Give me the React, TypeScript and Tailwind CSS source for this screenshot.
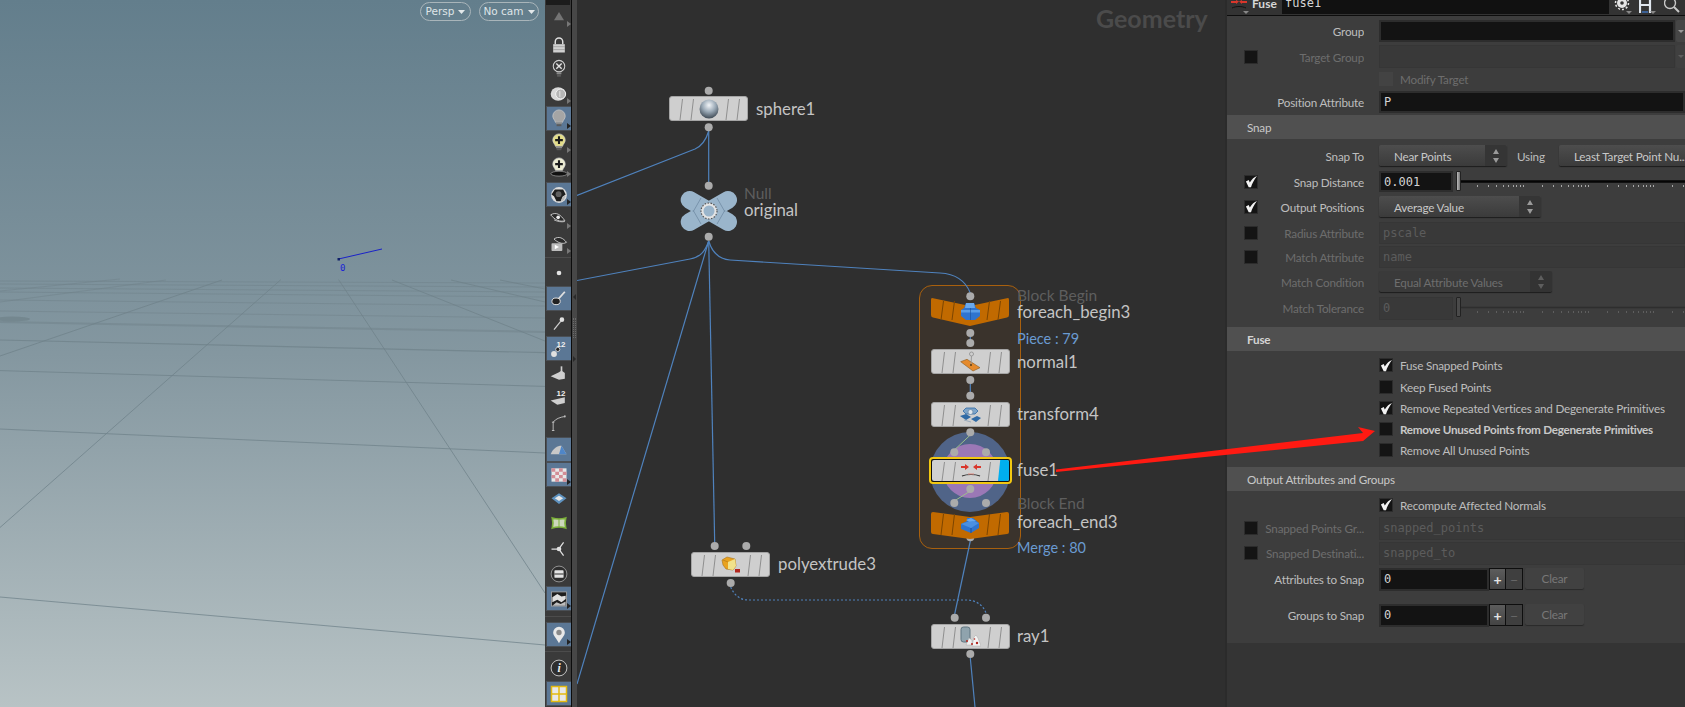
import React from "react";

const LABEL = "font-['Lato','Liberation_Sans',sans-serif]";
const MONO = "font-['DejaVu_Sans_Mono',monospace]";

/* ---------- Viewport ---------- */
function GridLines() {
  const lines: [number, number, number, number, number][] = [
    [0, 597, 545, 645, 1], [0, 429, 545, 453, 1], [0, 370.6, 545, 386.4, 1], [0, 340, 545, 352.6, 1.2],
    [0, 322, 545, 332, 2], [0, 311, 545, 318, 1], [0, 300, 545, 306, 1], [0, 292, 545, 297, 1],
    [0, 288, 545, 292, 1], [0, 284, 545, 287, 1], [0, 281, 545, 283, 1],
    [0, 527.5, 281, 279.5, 1], [545, 593, 338.5, 279.5, 1], [0, 356, 222, 280, 1], [545, 341, 392, 280, 1],
    [0, 302, 166, 280, 1], [545, 302, 451, 280, 1], [0, 291, 120, 279, 1], [545, 289, 500, 280, 1],
  ];
  return (
    <svg className="absolute inset-0" width="545" height="707" viewBox="0 0 545 707">
      {lines.map((l, i) => (
        <line key={i} x1={l[0]} y1={l[1]} x2={l[2]} y2={l[3]} stroke="#6f8189" strokeWidth={l[4]} strokeOpacity={l[1] < 335 && l[0] === 0 ? 0.5 : 0.75} />
      ))}
      <ellipse cx="12" cy="319" rx="18" ry="2.5" fill="#6f8189" fillOpacity=".7" />
      <line x1="338.5" y1="259" x2="382" y2="249" stroke="#1a22c8" strokeWidth="1" />
      <rect x="337.5" y="258" width="2.5" height="2.5" fill="#10206a" />
    </svg>
  );
}

function Pill({ text, cls }: { text: string; cls: string }) {
  return (
    <div className={`absolute top-[2px] h-[19px] rounded-full border border-[#a9b5ba] flex items-center justify-center gap-[4px] text-[10.5px] text-[#dfe5e8] font-['DejaVu_Sans',sans-serif] ${cls}`}>
      {text}
      <svg width="7" height="4" viewBox="0 0 7 4"><path d="M0 0h7L3.5 4z" fill="#e3e8ea" /></svg>
    </div>
  );
}

function Viewport() {
  return (
    <div className="relative w-[545px] h-full shrink-0 overflow-hidden bg-gradient-to-b from-[#637e8c] via-[#8497a0] to-[#b8c3c5]">
      <GridLines />
      <Pill text="Persp" cls="left-[420px] w-[51px]" />
      <Pill text="No cam" cls="left-[479px] w-[60px]" />
      <span className={`absolute left-[340px] top-[262px] text-[9px] leading-[12px] text-[#1a22d8] ${MONO}`}>0</span>
    </div>
  );
}

/* ---------- Toolbar ---------- */
const BULB = "M12 2.500a6.500 6.500 0 016.500 6.500c0 2.800-2.200 3.800-2.800 6.500H8.300C7.700 12.800 5.500 11.800 5.500 9A6.500 6.500 0 0112 2.500z";
const BIG = "translate(-1.800 -1.800) scale(1.150)";
function Bulb({ fill = "#b9b9b9", plus = false }: { fill?: string; plus?: boolean }) {
  return (
    <g transform={BIG}>
      <path d={BULB} fill={fill} stroke="#cfcfcf" strokeWidth=".7" />
      <rect x="8.800" y="15.500" width="6.400" height="2" fill="#8a8a8a" />
      <rect x="9.500" y="17.500" width="5" height="2" fill="#5a5a5a" />
      {plus && <path d="M12 5v8M8 9h8" stroke="#1c1c1c" strokeWidth="2.200" />}
    </g>
  );
}

function ToolIcon({ k }: { k: string }) {
  switch (k) {
    case "tri": return <path d="M12 6l6 10H6z" fill="#747474" />;
    case "lock": return <g><path d="M7.500 11V8a4.500 4.500 0 019 0v3" fill="none" stroke="#e0e0e0" strokeWidth="1.700" /><rect x="5" y="11" width="14" height="10" fill="#d0d0d0" /><path d="M5 14h14M5 17.500h14" stroke="#8a8a8a" strokeWidth=".7" /></g>;
    case "bx": return <g transform={BIG}><circle cx="12" cy="9" r="6" fill="#3c3c3c" stroke="#cfcfcf" strokeWidth="1.100" /><path d="M9.200 6.200l5.600 5.600M14.800 6.200l-5.600 5.600" stroke="#e0e0e0" strokeWidth="1.500" /><rect x="9.500" y="15.500" width="5" height="2" fill="#8a8a8a" /><rect x="10" y="17.500" width="4" height="2.500" fill="#5a5a5a" /></g>;
    case "sph": return <g><ellipse cx="11" cy="12" rx="9" ry="8" fill="#d8d8d8" /><circle cx="14" cy="12" r="6" fill="#b5b5b5" stroke="#f2f2f2" strokeWidth="1.200" /><path d="M13 8.500v7" stroke="#eee" /></g>;
    case "bulb": return <Bulb fill="#a5a5a5" />;
    case "ybulb": return <Bulb fill="#e3dd8a" plus />;
    case "wbulb": return <g transform={BIG}><ellipse cx="12" cy="19" rx="8.500" ry="2.500" fill="#111" stroke="#bbb" strokeWidth=".6" /><path d={BULB} fill="#ececd2" stroke="#cfcfcf" strokeWidth=".7" /><path d="M12 5v8M8 9h8" stroke="#1c1c1c" strokeWidth="2.200" /></g>;
    case "ball": return <g><circle cx="12" cy="12" r="9.500" fill="#dcdcdc" /><path d="M7 5.500h10l3 6-3 2-3 6-5 0-3-6-3-2z" fill="#1f1f1f" /><circle cx="11.500" cy="11" r="3.500" fill="#5f5f5f" /><path d="M16 14l4-1-2 5-4 2z" fill="#bbb" /></g>;
    case "eye": return <g><path d="M2 7c7-4 12 0 17 7-6 2-12-1-17-7z" fill="#2a2a2a" stroke="#ddd" strokeWidth="1" /><circle cx="11" cy="10" r="2.200" fill="#eee" /><path d="M6 13c4 2 9 3 13 2" stroke="#ccc" fill="none" /></g>;
    case "cam": return <g><path d="M6 6c6-4 11-1 15 4-5 3-11 0-15-4z" fill="#2a2a2a" stroke="#ddd" strokeWidth="1" /><rect x="3" y="11" width="13" height="9.500" rx="1" fill="#bcbcbc" /><path d="M7 13l5 2.700-5 2.700z" fill="#fff" /></g>;
    case "dot": return <circle cx="12" cy="12" r="2.800" fill="#e4e4e4" />;
    case "brush": return <g><path d="M11 13.500l8-9" stroke="#e0e0e0" strokeWidth="2.200" /><ellipse cx="8.500" cy="16" rx="5" ry="4" fill="#222" stroke="#e0e0e0" strokeWidth="1.200" /></g>;
    case "pen": return <g><path d="M6 20l8-10" stroke="#cfcfcf" strokeWidth="1.500" /><circle cx="15.500" cy="8" r="2.800" fill="#e0e0e0" /></g>;
    case "n12": return <g><circle cx="6" cy="18" r="3.500" fill="#e0e0e0" /><circle cx="10.500" cy="12.500" r="2.500" fill="#222" stroke="#e0e0e0" /><text x="9" y="10" fontSize="9.500" fontWeight="700" fill="#f0f0f0" fontFamily="Liberation Sans">12</text></g>;
    case "wedge": return <g><path d="M2 16l10-5 3-2 4 3v7l-7 1z" fill="#cfcfcf" /><path d="M15 10V4" stroke="#cfcfcf" strokeWidth="2" /></g>;
    case "w12": return <g><path d="M2 15l17-4v7l-9 2z" fill="#cfcfcf" /><text x="9" y="10" fontSize="9.500" fontWeight="700" fill="#f0f0f0" fontFamily="Liberation Sans">12</text></g>;
    case "corner": return <path d="M5 21V11c3-4 8-6 15-7M3.500 11h3M3.500 21h3M19 2.500v3" fill="none" stroke="#cfcfcf" strokeWidth="1" />;
    case "shade": return <g><path d="M2 17c3-7 8-10 13-10l6 10H9z" fill="#c8c8c8" /><path d="M15 7l6 10h-9z" fill="#4f86c8" /></g>;
    case "check": return <g><rect x="3" y="4" width="18" height="16" fill="#e8e8e8" /><path d="M3 4h4.500v4H3zM12 4h4.500v4H12zM7.500 8H12v4H7.500zM16.500 8H21v4h-4.500zM3 12h4.500v4H3zM12 12h4.500v4H12zM7.500 16H12v4H7.500zM16.500 16H21v4h-4.500z" fill="#d38d96" /></g>;
    case "diamond": return <g><path d="M12 5l9 6-9 7-9-7z" fill="#5f93c0" /><path d="M12 8l5 3-5 3.500L7 11z" fill="#e8e8e8" /></g>;
    case "green": return <g><path d="M4 6c5 1.500 11 1.500 16 0-1 4-1 8 0 12-5-1.500-11-1.500-16 0 1-4 1-8 0-12z" fill="#cdd8bc" stroke="#7db23a" strokeWidth="2" /><path d="M12 7.500v9" stroke="#7db23a" strokeWidth="1.200" /></g>;
    case "axes": return <g><path d="M11 12H3M12.500 11l5-7M12.500 13l5 7" stroke="#e0e0e0" strokeWidth="1.500" /><circle cx="12" cy="12" r="2.800" fill="#e0e0e0" /></g>;
    case "circ": return <g><circle cx="12" cy="12" r="9.500" fill="#2e2e2e" stroke="#a5a5a5" strokeWidth="1" /><rect x="6.500" y="7.500" width="11" height="9" rx="1" fill="#e4e4e4" /><path d="M6.500 12h11" stroke="#2e2e2e" strokeWidth="1.200" /></g>;
    case "photo": return <g><rect x="3" y="3.500" width="18" height="17" fill="#1e1e1e" stroke="#a5a5a5" /><path d="M4 10l6-4 5 3 5-1v4l-5 4-5-3-6 3z" fill="#e0e0e0" /><path d="M4 20l5-4 5 2 6-3v5z" fill="#bdbdbd" /></g>;
    case "pin": return <g><path d="M12 22c-3-6-7-9-7-13a7 7 0 0114 0c0 4-4 7-7 13z" fill="#e8e8e8" /><circle cx="12" cy="9" r="3.200" fill="#8a8a8a" /></g>;
    case "info": return <g><circle cx="12" cy="12" r="9.500" fill="#2e2e2e" stroke="#cfcfcf" strokeWidth="1.100" /><text x="12" y="17" textAnchor="middle" fontSize="14" fontStyle="italic" fontWeight="700" fill="#eee" fontFamily="Liberation Serif">i</text></g>;
    case "grid": return <g><rect x="3" y="3" width="18" height="18" fill="#e8e8e8" stroke="#e3b90f" strokeWidth="1.800" /><path d="M12 3v18M3 12h18" stroke="#e3b90f" strokeWidth="1.800" /></g>;
    default: return null;
  }
}

function Tool({ k, cls, sel, arrow }: { k: string; cls: string; sel?: boolean; arrow?: boolean }) {
  return (
    <div className={`relative h-[23px] w-[24px] ml-[1.500px] flex items-center justify-center shrink-0 ${sel ? "bg-[#5b7795] outline outline-1 outline-[#4a4f55]" : ""} ${cls}`}>
      <svg width="20" height="20" viewBox="0 0 24 24"><ToolIcon k={k} /></svg>
      {arrow && <span className={`absolute right-0 bottom-[1px] w-0 h-0 border-y-[3px] border-y-transparent border-l-[4px] ${sel ? "border-l-[#222]" : "border-l-[#777]"}`} />}
    </div>
  );
}

function Toolbar() {
  return (
    <div className="w-[26px] h-full bg-[#3a3a3a] flex flex-col shrink-0 relative">
      <div className="h-[5px] w-[24px] ml-[1px] bg-[#1c1c1c] shrink-0" />
      <Tool k="tri" cls="mt-[0px]" arrow />
      <Tool k="lock" cls="mt-[5px]" />
      <Tool k="bx" cls="mt-[1.500px]" />
      <Tool k="sph" cls="mt-[1.500px]" arrow />
      <Tool k="bulb" cls="mt-[2px]" sel arrow />
      <Tool k="ybulb" cls="mt-[1px]" arrow />
      <Tool k="wbulb" cls="mt-[1px]" arrow />
      <Tool k="ball" cls="mt-[5px]" sel arrow />
      <Tool k="eye" cls="mt-[1px]" arrow />
      <Tool k="cam" cls="mt-[2px]" arrow />
      <div className="h-px bg-[#4c4c4c] mt-[1.500px] shrink-0" />
      <Tool k="dot" cls="mt-[3.500px]" />
      <Tool k="brush" cls="mt-[2.500px]" sel />
      <Tool k="pen" cls="mt-[1.500px]" />
      <Tool k="n12" cls="mt-[3px]" sel />
      <Tool k="wedge" cls="mt-[1px]" />
      <Tool k="w12" cls="mt-[2px]" />
      <Tool k="corner" cls="mt-[2px]" />
      <Tool k="shade" cls="mt-[4px]" sel />
      <Tool k="check" cls="mt-[2px]" sel arrow />
      <Tool k="diamond" cls="mt-[1px]" />
      <Tool k="green" cls="mt-[1px]" />
      <Tool k="axes" cls="mt-[3px]" />
      <Tool k="circ" cls="mt-[2px]" />
      <Tool k="photo" cls="mt-[2px]" sel arrow />
      <div className="h-px bg-[#4c4c4c] mt-[6px] shrink-0" />
      <Tool k="pin" cls="mt-[6px]" sel arrow />
      <div className="h-px bg-[#4c4c4c] mt-[5px] shrink-0" />
      <Tool k="info" cls="mt-[4px]" />
      <Tool k="grid" cls="mt-[3px]" sel />
    </div>
  );
}

function Divider() {
  return (
    <div className="relative w-[6px] h-full shrink-0 bg-[#474747] border-l border-l-[#0c0c0c]">
      <span className="absolute left-[1px] top-[294px] w-0 h-0 border-y-[3px] border-y-transparent border-r-[3px] border-r-[#2a2a2a]" />
      <span className="absolute left-[1px] top-[318px] h-[20px] w-[3px] border-x border-dotted border-[#6a6a6a]" />
      <span className="absolute left-[1px] top-[356px] w-0 h-0 border-y-[3px] border-y-transparent border-l-[3px] border-l-[#2a2a2a]" />
    </div>
  );
}

/* ---------- Network ---------- */
function Stripes({ w = 79, h = 25, color = "#8f8f8f" }: { w?: number; h?: number; color?: string }) {
  return (
    <svg className="absolute inset-0" width={w} height={h} viewBox={`0 0 ${w} ${h}`}>
      {[10, 21, 56, 67].map((x) => (
        <line key={x} x1={x + 2.500} y1={2} x2={x} y2={h - 2} stroke={color} strokeWidth="1" />
      ))}
    </svg>
  );
}

function SphereIcon() {
  return (
    <svg width="20" height="20" viewBox="0 0 20 20">
      <defs>
        <radialGradient id="sg" cx="50%" cy="30%" r="70%">
          <stop offset="0" stopColor="#f2f5f8" />
          <stop offset=".5" stopColor="#9aa9b6" />
          <stop offset="1" stopColor="#3f4a55" />
        </radialGradient>
      </defs>
      <circle cx="10" cy="10" r="9.500" fill="url(#sg)" />
    </svg>
  );
}
function NormalIcon() {
  return (
    <svg width="21" height="21" viewBox="0 0 21 21">
      <path d="M.7 10.700L7 8.300 20 16.700 13 20z" fill="#e58a2c" stroke="#8a5a20" strokeWidth=".6" />
      <path d="M11 14L11.500 5" stroke="#9a9a9a" strokeWidth="1" />
      <circle cx="11.500" cy="3" r="2" fill="none" stroke="#9a9a9a" />
      <circle cx="11" cy="14" r="1" fill="#5a3a10" />
    </svg>
  );
}
function TransformIcon() {
  return (
    <svg width="21" height="16" viewBox="0 0 21 16">
      <path d="M6 1h9l3 3-3 3H6L3 4z" fill="#7da4c8" stroke="#2f6aa5" strokeWidth=".8" />
      <path d="M0 9l6-2 5 3-5 3zM11 12l6-3 4 2-5 4z" fill="#2f6aa5" />
      <circle cx="10.500" cy="5" r="2.500" fill="#dfe6ec" stroke="#6f8ca8" strokeWidth=".8" />
      <path d="M4 13l7 2" stroke="#9ab" strokeWidth="1" />
    </svg>
  );
}
function FuseIcon() {
  return (
    <svg width="20" height="15" viewBox="0 0 20 15">
      <path d="M0 3h4V1l4 3-4 3V5H0z" fill="#d9362b" />
      <path d="M20 3h-4V1l-4 3 4 3V5h4z" fill="#d9362b" />
      <path d="M1 13c5-2 13-2 18 0" stroke="#333" strokeWidth="1.200" fill="none" />
      <path d="M7 11h6" stroke="#e08a80" strokeWidth="1" />
    </svg>
  );
}
function ExtrudeIcon() {
  return (
    <svg width="20" height="17" viewBox="0 0 20 17">
      <path d="M1 4l5-3 8 2 1 7-3 4-7-1-3-4z" fill="#e9a21e" stroke="#a9741a" strokeWidth=".6" />
      <path d="M7 6l7-3 1 7-3 4-5-1z" fill="#f1e28b" />
      <path d="M2 4l5 2" stroke="#a9741a" strokeWidth=".6" />
      <rect x="14" y="13" width="5" height="3.500" fill="#b3261e" />
    </svg>
  );
}
function RayIcon() {
  return (
    <svg width="21" height="21" viewBox="0 0 21 21">
      <rect x="1" y="1" width="9" height="15" rx="2.500" fill="#8fa3ad" stroke="#5f7480" />
      <path d="M6 19l3-7 3 2 0 5z" fill="#efefef" stroke="#a9a9a9" strokeWidth=".5" />
      <path d="M12 20l2-9 2-2 2 3 3 8z" fill="#f4f4f4" stroke="#a9a9a9" strokeWidth=".5" />
      <circle cx="7" cy="15" r="1" fill="#b3261e" />
      <circle cx="17" cy="17" r="1.200" fill="#b3261e" />
      <circle cx="12" cy="18" r="1" fill="#b3261e" />
      <circle cx="14.500" cy="13" r=".8" fill="#b3261e" />
    </svg>
  );
}
function CubeIcon({ flat }: { flat?: boolean }) {
  return flat ? (
    <svg width="20" height="17" viewBox="0 0 20 17">
      <path d="M1 7l6-3V1l6 0 6 5v5l-8 5-10-4z" fill="#2f74cf" />
      <path d="M6 3l5-2 5 3-5 2z" fill="#6aa9ee" />
      <path d="M1 7l10 4 8-5-6-2-6 1z" fill="#4b90e2" />
      <path d="M11 11v5" stroke="#1c4f97" />
    </svg>
  ) : (
    <svg width="21" height="17" viewBox="0 0 21 17">
      <path d="M6 0h8l2 5 4 2v6l-5 4H6l-5-4V7l3-2z" fill="#2f74cf" />
      <path d="M6 0h8l1 5H5z" fill="#6aa9ee" />
      <path d="M1 7h19v2.500H1z" fill="#5b9de6" />
      <path d="M10.500 5v12" stroke="#1c4f97" strokeWidth=".6" />
    </svg>
  );
}

function GrayNode({ cls, children }: { cls: string; children: React.ReactNode }) {
  return (
    <div className={`absolute w-[79px] h-[25px] rounded-[3px] bg-[#cfcfcf] flex items-center justify-center border border-[#a5a5a5] ${cls}`}>
      <Stripes />
      <span className="relative flex">{children}</span>
    </div>
  );
}

function OrangeNode({ cls, top, children }: { cls: string; top?: boolean; children: React.ReactNode }) {
  return (
    <div className={`absolute w-[80px] h-[31px] flex items-center justify-center ${cls}`}>
      <svg className="absolute inset-0" width="80" height="31" viewBox="0 0 80 31">
        {top ? (
          <path d="M2 2l38 8 38-8q1 0 1 2v15q0 2-2 2.500L40 30 3 21.500Q1 21 1 19V4q0-2 1-2z" fill="#c16a00" />
        ) : (
          <path d="M3 2l37 5 37-5q2 0 2 2v18q0 2-2 2l-37 5-37-5q-2 0-2-2V4q0-2 2-2z" fill="#c16a00" />
        )}
        {[11, 22, 57, 68].map((x) => (
          <line key={x} x1={x + 2.500} y1={top ? 5 : 4} x2={x} y2={top ? 24 : 25} stroke="#7c4500" strokeWidth="1" />
        ))}
      </svg>
      <span className="relative flex">{children}</span>
    </div>
  );
}

function NullNode() {
  return (
    <div className="absolute left-[103px] top-[190px] w-[58px] h-[42px]">
      <svg width="58" height="42" viewBox="0 0 58 42">
        <path d="M9.700 10L48 32M48 10L9.700 32" stroke="#9ab5cb" strokeWidth="18" strokeLinecap="round" />
        <path d="M13 22L21 8M45 22L37 8M13 20L21 34M45 20L37 34" stroke="#7590a8" strokeWidth=".9" />
        <circle cx="29" cy="21" r="8" fill="#e5e5e5" stroke="#555" strokeWidth="1.200" strokeDasharray="1.500 1.500" />
        <circle cx="29" cy="21" r="5.500" fill="#9ab5cb" />
      </svg>
    </div>
  );
}

function NetLabel({ cls, children, tone = "text-[#c4c4c4]", size = "text-[16.8px]" }: { cls: string; children: React.ReactNode; tone?: string; size?: string }) {
  return <div className={`absolute whitespace-nowrap leading-[20px] ${size} ${tone} ${LABEL} ${cls}`}>{children}</div>;
}

function Wires() {
  const dots: [number, number][] = [
    [708.7, 90.7], [708.7, 127.3], [708.7, 185.7], [708.7, 236.7],
    [970.3, 296.3], [970.3, 333], [970.3, 343], [970.3, 380], [970.3, 395.7], [970.3, 432.3],
    [954.3, 452.3], [986, 452.3], [970.3, 489], [954.3, 503], [986, 503], [970.3, 537.3],
    [714.7, 546], [746.3, 546], [730.7, 583], [954.7, 617.7], [986, 617.7], [970.3, 654],
  ];
  return (
    <svg className="absolute inset-0 z-20" width="649" height="707" viewBox="577 0 649 707" fill="none">
      <g stroke="#4f82bd" strokeWidth="1.200">
        <path d="M708.700 131V182" />
        <path d="M708.700 131C706 140 702 146 695 149L577 195.500" />
        <path d="M708.700 241C705 252 700 257 690 259L577 280.500" />
        <path d="M708.700 241C712 252 718 259 730 260L940 273C958 274 966 282 970.300 293" />
        <path d="M708.700 241L577 684" />
        <path d="M708.700 241L714.700 543" />
        <path d="M970.300 337V340M970.300 384V392" />
        <path d="M970.300 541L954.700 614" />
        <path d="M970.300 658L975 707" />
        <path d="M730.700 587C734 595 740 600 748 600H966C976 600 983 605 986 613" strokeDasharray="2 2" />
      </g>
      <path d="M970.300 435L954.300 450M970.300 491L954.300 501" stroke="#9cc08a" strokeWidth="1" />
      {dots.map(([x, y], i) => (
        <circle key={i} cx={x} cy={y} r="4" fill="#ababab" />
      ))}
    </svg>
  );
}

function Network() {
  return (
    <div className="relative flex-1 h-full bg-[#2f2f2f] overflow-hidden">
      <div className={`absolute left-[519px] top-[4px] text-[25px] leading-[28px] font-bold text-[#4b4b4b] ${LABEL}`}>Geometry</div>

      <div className="absolute left-[342px] top-[285px] w-[102px] h-[264px] rounded-[13px] border border-[#a8600e] bg-[#3a332c]" />
      <div className="absolute left-[353px] top-[432px] w-[80px] h-[80px] rounded-full bg-[#506488]" />
      <div className="absolute left-[366px] top-[444px] w-[54px] h-[54px] rounded-full bg-[#9b78b6]" />

      <Wires />

      <GrayNode cls="z-10 left-[92px] top-[96px]"><SphereIcon /></GrayNode>
      <NullNode />
      <OrangeNode top cls="z-10 left-[353px] top-[296px]"><CubeIcon /></OrangeNode>
      <GrayNode cls="z-10 left-[354px] top-[349px]"><NormalIcon /></GrayNode>
      <GrayNode cls="z-10 left-[354px] top-[402px]"><TransformIcon /></GrayNode>
      <div className="absolute z-30 left-[352px] top-[457px] w-[83px] h-[27px] rounded-[4px] border-2 border-[#f2c811] overflow-hidden bg-[#111] p-px">
        <div className="relative h-full rounded-[2px] bg-[#d0d0d0] flex items-center justify-center overflow-hidden">
          <Stripes w={77} h={23} />
          <span className="relative flex"><FuseIcon /></span>
          <span className="absolute -right-[2px] top-0 h-full w-[13px] bg-[#00aeef] -skew-x-6 origin-bottom" />
        </div>
      </div>
      <OrangeNode cls="z-30 left-[353px] top-[510px]"><CubeIcon flat /></OrangeNode>
      <GrayNode cls="z-10 left-[114px] top-[552px]"><ExtrudeIcon /></GrayNode>
      <GrayNode cls="z-10 left-[354px] top-[624px]"><RayIcon /></GrayNode>

      <NetLabel cls="left-[179px] top-[99px]">sphere1</NetLabel>
      <NetLabel cls="left-[167px] top-[183px]" tone="text-[#5e5e5e]" size="text-[15.500px]">Null</NetLabel>
      <NetLabel cls="left-[167px] top-[200px]">original</NetLabel>
      <NetLabel cls="left-[440px] top-[285px]" tone="text-[#5e5e5e]" size="text-[15.500px]">Block Begin</NetLabel>
      <NetLabel cls="left-[440px] top-[302px]">foreach_begin3</NetLabel>
      <NetLabel cls="left-[440px] top-[329px]" tone="text-[#6a9bd2]" size="text-[14.500px]">Piece : 79</NetLabel>
      <NetLabel cls="left-[440px] top-[352px]">normal1</NetLabel>
      <NetLabel cls="left-[440px] top-[404px]">transform4</NetLabel>
      <NetLabel cls="left-[440px] top-[460px]">fuse1</NetLabel>
      <NetLabel cls="left-[440px] top-[493px]" tone="text-[#5e5e5e]" size="text-[15.500px]">Block End</NetLabel>
      <NetLabel cls="left-[440px] top-[512px]">foreach_end3</NetLabel>
      <NetLabel cls="left-[440px] top-[538px]" tone="text-[#6a9bd2]" size="text-[14.500px]">Merge : 80</NetLabel>
      <NetLabel cls="left-[201px] top-[554px]">polyextrude3</NetLabel>
      <NetLabel cls="left-[440px] top-[626px]">ray1</NetLabel>
    </div>
  );
}

/* ---------- Parameters ---------- */
const PTEXT = "text-[11.7px] tracking-[-0.2px] leading-[16px]";

function Check({ on, dim, cls = "" }: { on?: boolean; dim?: boolean; cls?: string }) {
  return (
    <span className={`relative flex items-center justify-center w-[14px] h-[14px] shrink-0 ${dim ? "bg-[#434343]" : "bg-[#141414] border border-[#2c2c2c]"} ${cls}`}>
      {on && (
        <svg width="13" height="13" viewBox="0 0 13 13">
          <path d="M1 6.500L4 12.800H6.500C7.500 9 10 4.500 13 .5 10 1.500 7.500 4 5.200 7.500L4 5z" fill="#f2f2f2" />
        </svg>
      )}
    </span>
  );
}

function Row({ label, check, on, dim, cls, children }: { label?: string; check?: boolean; on?: boolean; dim?: boolean; cls: string; children?: React.ReactNode }) {
  return (
    <div className={`flex items-center pl-[17px] shrink-0 ${cls}`}>
      <span className="w-[14px] shrink-0 flex">{check && <Check on={on} />}</span>
      <span className={`w-[106px] shrink-0 text-right whitespace-nowrap overflow-hidden ${PTEXT} ${dim ? "text-[#6d6d6d]" : "text-[#bdbdbd]"}`}>{label}</span>
      <span className="w-[15px] shrink-0" />
      {children}
    </div>
  );
}

function Field({ value, dim, cls = "flex-1" }: { value?: string; dim?: boolean; cls?: string }) {
  return (
    <div className={`h-full flex items-center pl-[3px] text-[12px] ${MONO} ${dim ? "bg-[#393939] border border-[#363636] text-[#5c5c5c]" : "bg-[#131313] border-2 border-[#2d2d2d] text-[#d4d4d4]"} ${cls}`}>
      {value}
    </div>
  );
}

function Select({ label, dim, cls, pad = "pl-[15px]" }: { label: string; dim?: boolean; cls: string; pad?: string }) {
  return (
    <div className={`relative h-full shrink-0 flex items-center rounded-[2px] shadow-[0_1px_1px_#1c1c1c] ${dim ? "bg-[#3a3a3a] text-[#6e6e6e]" : "bg-gradient-to-b from-[#4d4d4d] to-[#3b3b3b] text-[#c8c8c8]"} ${cls}`}>
      <span className={`flex-1 whitespace-nowrap ${PTEXT} ${pad}`}>{label}</span>
      <span className={`w-[22px] h-full flex items-center justify-center rounded-r-[2px] ${dim ? "bg-[#333]" : "bg-[#353535]"}`}>
        <svg width="8" height="16" viewBox="0 0 8 16">
          <path d="M4 1l3 5H1zM4 15l3-5H1z" fill={dim ? "#5e5e5e" : "#9a9a9a"} />
        </svg>
      </span>
    </div>
  );
}

function Slider({ dim }: { dim?: boolean }) {
  const ticks: number[] = [];
  for (let d = 0; d < 4; d++) {
    for (const t of [0, 11, 19, 26, 31, 36, 39, 43, 46]) ticks.push(24 + d * 65 + t);
  }
  return (
    <div className="relative flex-1 h-full">
      <span className={`absolute left-[3px] top-0 w-[5px] h-[20px] rounded-[1px] border border-[#222] ${dim ? "bg-[#4a4a4a]" : "bg-gradient-to-r from-[#bbb] to-[#777]"}`} />
      <svg className="absolute left-0 top-0" width="232" height="24" viewBox="0 0 232 24">
        <line x1="8" y1="10.500" x2="232" y2="10.500" stroke={dim ? "#2e2e2e" : "#050505"} strokeWidth={dim ? 1.500 : 2.500} />
        {ticks.map((x, i) => (
          <rect key={i} x={x} y="14" width="1" height="2" fill={dim ? "#5e5e5e" : "#a8a8a8"} />
        ))}
      </svg>
    </div>
  );
}

function Section({ title, bold, cls }: { title: string; bold?: boolean; cls: string }) {
  return (
    <div className={`h-[24px] bg-[#505050] flex items-center pl-[20px] shrink-0 ${PTEXT} ${bold ? "font-bold text-[#d4d4d4]" : "text-[#c8c8c8]"} ${cls}`}>
      {title}
    </div>
  );
}

function CheckRow({ label, on, strong }: { label: string; on?: boolean; strong?: boolean }) {
  return (
    <div className="h-[21px] flex items-center pl-[152px] shrink-0">
      <Check on={on} />
      <span className={`ml-[7px] whitespace-nowrap text-[11.7px] leading-[16px] ${strong ? "font-bold text-[#c8c8c8] tracking-[-0.28px]" : "text-[#bdbdbd] tracking-[-0.2px]"}`}>{label}</span>
    </div>
  );
}

function Multi({ cls, label }: { cls: string; label: string }) {
  return (
    <Row label={label} cls={`h-[23px] ${cls}`}>
      <Field value="0" cls="w-[110px]" />
      <span className="w-[17px] h-[22px] border border-[#0e0e0e] bg-gradient-to-b from-[#5c5c5c] to-[#444] text-[#e5e5e5] flex items-center justify-center text-[14px] font-bold">+</span>
      <span className="w-[17px] h-[22px] border border-[#0e0e0e] border-l-0 bg-[#3f3f3f] text-[#666] flex items-center justify-center text-[14px]">−</span>
      <span className={`ml-[2px] w-[59px] h-[21px] -mt-[2px] bg-[#414141] shadow-[0_1px_1px_#2a2a2a] rounded-[2px] flex items-center justify-center text-[#787878] ${PTEXT}`}>Clear</span>
    </Row>
  );
}

function HeaderArrow({ cls }: { cls: string }) {
  return <span className={`absolute bottom-[1px] w-0 h-0 border-x-[3px] border-x-transparent border-t-[3px] border-t-[#888] ${cls}`} />;
}

function PanelHeader() {
  return (
    <div className="h-[16px] shrink-0 bg-[#333333] border-b-[1.500px] border-b-[#0d0d0d] flex items-end relative overflow-hidden">
      <svg className="absolute left-[4px] top-0" width="16" height="12" viewBox="0 0 16 12">
        <path d="M0 1h5V0l3 1.500L5 4V3H0zM16 1h-5V0L8 1.500 11 4V3h5z" fill="#d9362b" />
        <path d="M1 8c4-2 10-2 14 0" stroke="#111" strokeWidth="1" fill="none" />
      </svg>
      <HeaderArrow cls="left-[16px]" />
      <span className="absolute left-[25px] top-[-4px] text-[12px] leading-[16px] font-bold text-[#d8d8d8]">Fuse</span>
      <div className={`absolute left-[55px] top-0 w-[327px] h-[14px] bg-[#111] text-[12px] leading-[6px] pl-[3px] text-[#d4d4d4] ${MONO}`}>fuse1</div>
      <svg className="absolute left-[387px] top-0" width="16" height="12" viewBox="0 0 16 12">
        <circle cx="8" cy="3" r="5" fill="#e5e5e5" />
        <circle cx="8" cy="3" r="6.500" fill="none" stroke="#e5e5e5" strokeWidth="1.500" strokeDasharray="2 2" />
        <circle cx="8" cy="3" r="1.800" fill="#333" />
      </svg>
      <HeaderArrow cls="left-[399px]" />
      <svg className="absolute left-[412px] top-0" width="14" height="14" viewBox="0 0 14 14">
        <path d="M1 13V0M11 13V0M1 5h10" stroke="#dfe6ee" strokeWidth="2.200" fill="none" />
        <path d="M3 12h6" stroke="#3f72b8" strokeWidth="1.500" />
      </svg>
      <HeaderArrow cls="left-[423px]" />
      <svg className="absolute left-[437px] top-0" width="16" height="14" viewBox="0 0 16 14">
        <circle cx="6" cy="3" r="5.500" fill="none" stroke="#c8c8c8" strokeWidth="1.400" />
        <path d="M10 7l5 5" stroke="#c8c8c8" strokeWidth="2" />
      </svg>
    </div>
  );
}

function DropStub({ dim }: { dim?: boolean }) {
  return (
    <span className={`ml-[1px] flex-1 h-full rounded-l-[2px] flex items-center pl-[2px] ${dim ? "bg-[#404040]" : "bg-[#464646]"}`}>
      <span className={`w-0 h-0 border-x-[3px] border-x-transparent border-t-[3px] ${dim ? "border-t-[#5e5e5e]" : "border-t-[#999]"}`} />
    </span>
  );
}

function Panel() {
  return (
    <div className={`w-[460px] h-full shrink-0 flex flex-col bg-[#343434] border-l-2 border-l-[#2b2b2b] overflow-hidden ${LABEL}`}>
      <PanelHeader />
      <div className="h-[626.500px] bg-[#3d3d3d] flex flex-col shrink-0 overflow-hidden">
        <Row label="Group" cls="h-[22px] mt-[4px]">
          <Field cls="w-[296px]" />
          <DropStub />
        </Row>
        <Row label="Target Group" check dim cls="h-[23px] mt-[3px]">
          <Field dim cls="w-[296px]" />
          <DropStub dim />
        </Row>
        <Row cls="h-[15px] mt-[3px]">
          <Check dim />
          <span className={`ml-[7px] text-[#6d6d6d] ${PTEXT}`}>Modify Target</span>
        </Row>
        <Row label="Position Attribute" cls="h-[22px] mt-[5px]"><Field value="P" /></Row>
        <Section title="Snap" cls="mt-[2px]" />
        <Row label="Snap To" cls="h-[21px] mt-[6px]">
          <Select label="Near Points" cls="w-[128px]" />
          <span className={`ml-[10px] w-[42px] shrink-0 text-[#bdbdbd] ${PTEXT}`}>Using</span>
          <span className={`w-[126px] shrink-0 h-full bg-gradient-to-b from-[#4d4d4d] to-[#3b3b3b] rounded-l-[2px] shadow-[0_1px_1px_#1c1c1c] pl-[15px] flex items-center whitespace-nowrap text-[#c8c8c8] ${PTEXT}`}>Least Target Point Nu...</span>
        </Row>
        <Row label="Snap Distance" check on cls="h-[21px] mt-[5px]">
          <Field value="0.001" cls="w-[74px]" />
          <Slider />
        </Row>
        <Row label="Output Positions" check on cls="h-[21px] mt-[4px]">
          <Select label="Average Value" cls="w-[162px]" />
        </Row>
        <Row label="Radius Attribute" check dim cls="h-[22px] mt-[4.500px]"><Field dim value="pscale" /></Row>
        <Row label="Match Attribute" check dim cls="h-[22px] mt-[2.500px]"><Field dim value="name" /></Row>
        <Row label="Match Condition" dim cls="h-[21px] mt-[3px]">
          <Select dim label="Equal Attribute Values" cls="w-[173px]" />
        </Row>
        <Row label="Match Tolerance" dim cls="h-[23px] mt-[4.500px]">
          <Field dim value="0" cls="w-[74px]" />
          <Slider dim />
        </Row>
        <Section title="Fuse" bold cls="mt-[7.500px]" />
        <div className="h-[3.500px] shrink-0" />
        <CheckRow label="Fuse Snapped Points" on />
        <div className="h-[.5px] shrink-0" />
        <CheckRow label="Keep Fused Points" />
        <div className="h-[.5px] shrink-0" />
        <CheckRow label="Remove Repeated Vertices and Degenerate Primitives" on />
        <CheckRow label="Remove Unused Points from Degenerate Primitives" strong />
        <CheckRow label="Remove All Unused Points" />
        <Section title="Output Attributes and Groups" cls="mt-[6px]" />
        <div className="h-[3.500px] shrink-0" />
        <CheckRow label="Recompute Affected Normals" on />
        <Row label="Snapped Points Gr..." check dim cls="h-[23px] mt-[1.500px]"><Field dim value="snapped_points" /></Row>
        <Row label="Snapped Destinati..." check dim cls="h-[23px] mt-[2px]"><Field dim value="snapped_to" /></Row>
        <Multi label="Attributes to Snap" cls="mt-[3px]" />
        <Multi label="Groups to Snap" cls="mt-[13px]" />
      </div>
    </div>
  );
}

function RedArrow() {
  return (
    <svg className="absolute left-0 top-0 z-40 pointer-events-none" width="1685" height="707" viewBox="0 0 1685 707">
      <path d="M1056 469.500L1363 433 1358 427 1375 431 1359.500 444 1363 441 1056 472z" fill="#ff1a12" />
    </svg>
  );
}

export default function App() {
  return (
    <div className="relative w-[1685px] h-[707px] flex overflow-hidden bg-[#2f2f2f]">
      <Viewport />
      <Toolbar />
      <Divider />
      <Network />
      <Panel />
      <RedArrow />
    </div>
  );
}
